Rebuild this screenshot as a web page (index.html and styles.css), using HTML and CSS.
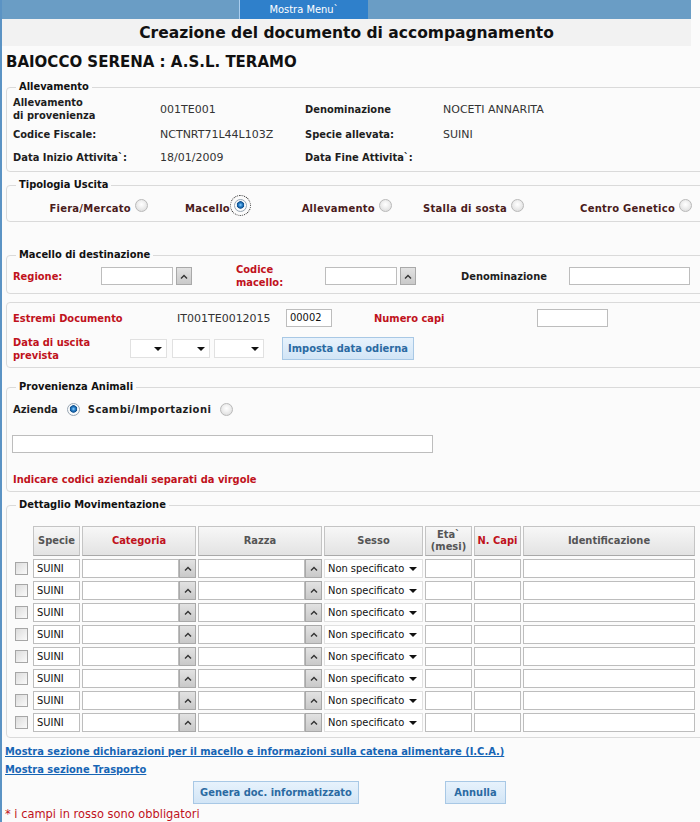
FILE: index.html
```html
<!DOCTYPE html>
<html lang="it">
<head>
<meta charset="utf-8">
<title>Creazione del documento di accompagnamento</title>
<link rel="stylesheet" href="styles.css">
</head>
<body>
<div class="page">
  <div class="topbar"><div class="menutab">Mostra Menu`</div></div>
  <h1 class="title">Creazione del documento di accompagnamento</h1>
  <h2 class="owner">BAIOCCO SERENA : A.S.L. TERAMO</h2>

  <fieldset class="fs fs-alle">
    <legend>Allevamento</legend>
    <div class="info">
      <span class="lbl">Allevamento<br>di provenienza</span><span class="val">001TE001</span><span class="lbl">Denominazione</span><span class="val">NOCETI ANNARITA</span>
      <span class="lbl">Codice Fiscale:</span><span class="val">NCTNRT71L44L103Z</span><span class="lbl">Specie allevata:</span><span class="val">SUINI</span>
      <span class="lbl">Data Inizio Attivita`:</span><span class="val">18/01/2009</span><span class="lbl">Data Fine Attivita`:</span><span class="val"></span>
    </div>
  </fieldset>

  <fieldset class="fs fs-tipo">
    <legend>Tipologia Uscita</legend>
    <div class="tipo">
      <label class="opt">Fiera/Mercato <input type="radio" name="tipo" class="rd"></label>
      <label class="opt">Macello <input type="radio" name="tipo" class="rd focus" checked></label>
      <label class="opt">Allevamento <input type="radio" name="tipo" class="rd"></label>
      <label class="opt">Stalla di sosta <input type="radio" name="tipo" class="rd"></label>
      <label class="opt">Centro Genetico <input type="radio" name="tipo" class="rd"></label>
    </div>
  </fieldset>

  <fieldset class="fs fs-dest">
    <legend>Macello di destinazione</legend>
    <div class="row dest">
      <span class="req w-reg">Regione:</span>
      <span class="in w72"></span><span class="up"><svg width="8" height="5" viewBox="0 0 8 5"><polyline points="1,4.5 4,1.5 7,4.5" fill="none" stroke="#333" stroke-width="1.4"/></svg></span>
      <span class="req w-cod">Codice<br>macello:</span>
      <span class="in w72"></span><span class="up"><svg width="8" height="5" viewBox="0 0 8 5"><polyline points="1,4.5 4,1.5 7,4.5" fill="none" stroke="#333" stroke-width="1.4"/></svg></span>
      <span class="lbl w-den">Denominazione</span>
      <span class="in w121"></span>
    </div>
  </fieldset>

  <fieldset class="fs fs-estr">
    <div class="row estr1">
      <span class="req w-estr">Estremi Documento</span>
      <span class="val w-code">IT001TE0012015</span>
      <span class="in w46 txt">00002</span>
      <span class="req w-num">Numero capi</span>
      <span class="in w71"></span>
    </div>
    <div class="row estr2">
      <span class="req w-data">Data di uscita<br>prevista</span>
      <span class="sel s37"><i class="caret"></i></span>
      <span class="sel s38"><i class="caret"></i></span>
      <span class="sel s50"><i class="caret"></i></span>
      <button class="btn b-imp" type="button">Imposta data odierna</button>
    </div>
  </fieldset>

  <fieldset class="fs fs-prov">
    <legend>Provenienza Animali</legend>
    <div class="row prov1">
      <label class="vlbl">Azienda</label>
      <input type="radio" name="prov" class="rd r-az" checked>
      <label class="vlbl l-sc">Scambi/Importazioni</label>
      <input type="radio" name="prov" class="rd r-sc">
    </div>
    <div class="in prov-in"></div>
    <div class="req hint">Indicare codici aziendali separati da virgole</div>
  </fieldset>

  <fieldset class="fs fs-det">
    <legend class="req">Dettaglio Movimentazione</legend>
    <div class="det">
      <div></div>
      <div class="th">Specie</div>
      <div class="th req">Categoria</div>
      <div class="th">Razza</div>
      <div class="th">Sesso</div>
      <div class="th">Eta`<br>(mesi)</div>
      <div class="th req">N. Capi</div>
      <div class="th">Identificazione</div>

      <div class="cb"><span class="chk"></span></div><div class="in txt">SUINI</div><div class="combo"><span class="in"></span><span class="up"><svg width="8" height="5" viewBox="0 0 8 5"><polyline points="1,4.5 4,1.5 7,4.5" fill="none" stroke="#333" stroke-width="1.4"/></svg></span></div><div class="combo"><span class="in"></span><span class="up"><svg width="8" height="5" viewBox="0 0 8 5"><polyline points="1,4.5 4,1.5 7,4.5" fill="none" stroke="#333" stroke-width="1.4"/></svg></span></div><div class="sel sx">Non specificato<i class="caret"></i></div><div class="in"></div><div class="in"></div><div class="in"></div>

      <div class="cb"><span class="chk"></span></div><div class="in txt">SUINI</div><div class="combo"><span class="in"></span><span class="up"><svg width="8" height="5" viewBox="0 0 8 5"><polyline points="1,4.5 4,1.5 7,4.5" fill="none" stroke="#333" stroke-width="1.4"/></svg></span></div><div class="combo"><span class="in"></span><span class="up"><svg width="8" height="5" viewBox="0 0 8 5"><polyline points="1,4.5 4,1.5 7,4.5" fill="none" stroke="#333" stroke-width="1.4"/></svg></span></div><div class="sel sx">Non specificato<i class="caret"></i></div><div class="in"></div><div class="in"></div><div class="in"></div>

      <div class="cb"><span class="chk"></span></div><div class="in txt">SUINI</div><div class="combo"><span class="in"></span><span class="up"><svg width="8" height="5" viewBox="0 0 8 5"><polyline points="1,4.5 4,1.5 7,4.5" fill="none" stroke="#333" stroke-width="1.4"/></svg></span></div><div class="combo"><span class="in"></span><span class="up"><svg width="8" height="5" viewBox="0 0 8 5"><polyline points="1,4.5 4,1.5 7,4.5" fill="none" stroke="#333" stroke-width="1.4"/></svg></span></div><div class="sel sx">Non specificato<i class="caret"></i></div><div class="in"></div><div class="in"></div><div class="in"></div>

      <div class="cb"><span class="chk"></span></div><div class="in txt">SUINI</div><div class="combo"><span class="in"></span><span class="up"><svg width="8" height="5" viewBox="0 0 8 5"><polyline points="1,4.5 4,1.5 7,4.5" fill="none" stroke="#333" stroke-width="1.4"/></svg></span></div><div class="combo"><span class="in"></span><span class="up"><svg width="8" height="5" viewBox="0 0 8 5"><polyline points="1,4.5 4,1.5 7,4.5" fill="none" stroke="#333" stroke-width="1.4"/></svg></span></div><div class="sel sx">Non specificato<i class="caret"></i></div><div class="in"></div><div class="in"></div><div class="in"></div>

      <div class="cb"><span class="chk"></span></div><div class="in txt">SUINI</div><div class="combo"><span class="in"></span><span class="up"><svg width="8" height="5" viewBox="0 0 8 5"><polyline points="1,4.5 4,1.5 7,4.5" fill="none" stroke="#333" stroke-width="1.4"/></svg></span></div><div class="combo"><span class="in"></span><span class="up"><svg width="8" height="5" viewBox="0 0 8 5"><polyline points="1,4.5 4,1.5 7,4.5" fill="none" stroke="#333" stroke-width="1.4"/></svg></span></div><div class="sel sx">Non specificato<i class="caret"></i></div><div class="in"></div><div class="in"></div><div class="in"></div>

      <div class="cb"><span class="chk"></span></div><div class="in txt">SUINI</div><div class="combo"><span class="in"></span><span class="up"><svg width="8" height="5" viewBox="0 0 8 5"><polyline points="1,4.5 4,1.5 7,4.5" fill="none" stroke="#333" stroke-width="1.4"/></svg></span></div><div class="combo"><span class="in"></span><span class="up"><svg width="8" height="5" viewBox="0 0 8 5"><polyline points="1,4.5 4,1.5 7,4.5" fill="none" stroke="#333" stroke-width="1.4"/></svg></span></div><div class="sel sx">Non specificato<i class="caret"></i></div><div class="in"></div><div class="in"></div><div class="in"></div>

      <div class="cb"><span class="chk"></span></div><div class="in txt">SUINI</div><div class="combo"><span class="in"></span><span class="up"><svg width="8" height="5" viewBox="0 0 8 5"><polyline points="1,4.5 4,1.5 7,4.5" fill="none" stroke="#333" stroke-width="1.4"/></svg></span></div><div class="combo"><span class="in"></span><span class="up"><svg width="8" height="5" viewBox="0 0 8 5"><polyline points="1,4.5 4,1.5 7,4.5" fill="none" stroke="#333" stroke-width="1.4"/></svg></span></div><div class="sel sx">Non specificato<i class="caret"></i></div><div class="in"></div><div class="in"></div><div class="in"></div>

      <div class="cb"><span class="chk"></span></div><div class="in txt">SUINI</div><div class="combo"><span class="in"></span><span class="up"><svg width="8" height="5" viewBox="0 0 8 5"><polyline points="1,4.5 4,1.5 7,4.5" fill="none" stroke="#333" stroke-width="1.4"/></svg></span></div><div class="combo"><span class="in"></span><span class="up"><svg width="8" height="5" viewBox="0 0 8 5"><polyline points="1,4.5 4,1.5 7,4.5" fill="none" stroke="#333" stroke-width="1.4"/></svg></span></div><div class="sel sx">Non specificato<i class="caret"></i></div><div class="in"></div><div class="in"></div><div class="in"></div>
    </div>
  </fieldset>

  <div class="links">
    <a href="#" class="lnk l1">Mostra sezione dichiarazioni per il macello e informazioni sulla catena alimentare (I.C.A.)</a>
    <a href="#" class="lnk l2">Mostra sezione Trasporto</a>
  </div>
  <div class="row actions">
    <button class="btn b-gen" type="button">Genera doc. informatizzato</button>
    <button class="btn b-ann" type="button">Annulla</button>
  </div>
  <div class="note">* i campi in rosso sono obbligatori</div>
</div>
</body>
</html>
```

FILE: styles.css
```css
* { box-sizing: border-box; }
html, body { margin: 0; padding: 0; overflow: hidden; background: #fbfbfb; }
body {
  font-family: "DejaVu Sans Condensed", "DejaVu Sans", sans-serif;
  font-size: 11px;
  line-height: 13px;
  color: #222;
}
.page { width: 730px; min-height: 822px; border-left: 2px solid #5b93c4; }

.topbar { width: 689px; height: 19px; background: #6a9dc5; padding-left: 237px; }
.menutab {
  width: 129px; height: 19px; background: #2f80cb; border-left: 1px solid #a9cdee;
  color: #fff; font-size: 11px; line-height: 19px; text-align: center;
}
.title {
  margin: 0; width: 689px; height: 27px; background: #f2f2f2;
  font-family: "DejaVu Sans", sans-serif; font-size: 15.5px; font-weight: bold;
  line-height: 28px; text-align: center; color: #111;
}
.owner {
  margin: 0; padding: 7px 0 9px 4px;
  font-family: "DejaVu Sans", sans-serif; font-size: 15px; line-height: 18px;
  font-weight: bold; color: #111;
}

.fs {
  margin: 0 0 0 4px; padding: 0 6px; min-width: 0;
  border: 1px solid #dadada; border-radius: 4px;
}
.fs legend { margin-left: 3px; padding: 0 3px; font-weight: bold; line-height: 14px; color: #111; }
.fs-tipo { margin-top: 6px; }
.fs-dest { margin-top: 26px; }
.fs-estr { margin-top: 8px; }
.fs-prov { margin-top: 12px; }
.fs-det { margin-top: 6px; }

.lbl { font-weight: bold; color: #1e1e1e; }
.val { font-family: "DejaVu Sans", sans-serif; font-size: 11px; color: #333; }
.req { color: #c0121c; font-weight: bold; }

.info {
  display: grid; grid-template-columns: 147px 145px 138px 1fr;
  grid-template-rows: 26px 24px 23px; align-items: center; padding: 2px 0;
}

.tipo {
  display: grid; grid-template-columns: 135px 99px 145px 132px 168px;
  height: 18px; align-items: center; margin: 7px 0 4px;
}
.opt {
  display: flex; justify-content: flex-end; align-items: center; gap: 4px;
  font-family: "DejaVu Sans", sans-serif; font-size: 10px; font-weight: bold;
  letter-spacing: 0.25px; color: #4a1c1c;
}
.opt .rd { margin-bottom: 6px; }

.rd {
  -webkit-appearance: none; appearance: none; margin: 0; flex: none;
  width: 13px; height: 13px; border-radius: 50%;
  border: 1px solid #b9b9b9;
  background: radial-gradient(circle at 50% 40%, #ffffff 0, #f2f2f2 35%, #d6d6d6 100%);
}
.rd:checked {
  border-color: #98a6b3;
  background: radial-gradient(circle at 50% 45%, #9ad6ff 0, #2f87d0 1.6px, #0d4f8e 3.4px, #e6edf3 4px, #ffffff 4.8px, #dedede 100%);
}
.rd.focus { outline: 1px dotted #222; outline-offset: 3px; }

.row { display: flex; align-items: center; }

.in { display: block; height: 18px; border: 1px solid #bdbdbd; background: #fff; flex: none; }
.in.txt { font-size: 11px; line-height: 16px; padding-left: 3px; color: #111; }
.up {
  display: flex; align-items: center; justify-content: center; flex: none;
  width: 16px; height: 18px; border: 1px solid #a9a9a9;
  background: linear-gradient(#e2e2e2, #c9c9c9);
}

.dest { height: 26px; margin: 1px 0 4px; }
.w-reg { width: 88px; }
.w72 { width: 72px; }
.dest .up { margin-left: 3px; }
.w-cod { width: 89px; margin-left: 44px; }
.w-den { width: 108px; margin-left: 45px; }
.w121 { width: 121px; }

.estr1 { height: 22px; margin-top: 4px; }
.w-estr { width: 164px; }
.w-code { width: 109px; }
.w46 { width: 46px; }
.w-num { width: 163px; margin-left: 42px; }
.w71 { width: 71px; }
.estr2 { height: 27px; margin: 6px 0 5px; }
.w-data { width: 117px; }

.sel {
  display: flex; align-items: center; height: 19px; flex: none;
  border: 1px solid #e1e1e1; background: #fff; padding: 0 4px 0 3px;
}
.caret {
  margin-left: auto; width: 0; height: 0;
  border-left: 4px solid transparent; border-right: 4px solid transparent; border-top: 4px solid #111;
}
.s37 { width: 37px; }
.s38 { width: 38px; margin-left: 5px; }
.s50 { width: 50px; margin-left: 4px; }

.btn {
  height: 23px; padding: 0; border: 1px solid #a8c8e5;
  background: linear-gradient(#e7f2fc, #d2e5f6);
  color: #2b6aa2; font-family: "DejaVu Sans Condensed", "DejaVu Sans", sans-serif;
  font-size: 11px; font-weight: bold;
}
.b-imp { width: 132px; margin-left: 18px; }

.prov1 { height: 16px; margin-top: 7px; }
.vlbl { font-family: "DejaVu Sans", sans-serif; font-size: 10px; font-weight: bold; color: #1e1e1e; }
.l-sc { letter-spacing: 0.4px; }
.r-az { margin-left: 9px; }
.l-sc { margin-left: 8px; }
.r-sc { margin-left: 9px; }
.prov-in { width: 421px; margin: 18px 0 0 -1px; }
.hint { margin: 20px 0 4px; line-height: 14px; }

.det {
  display: grid;
  grid-template-columns: 18px 47px 114px 124px 99px 47px 47px 172px;
  grid-template-rows: 30px; grid-auto-rows: 19px;
  column-gap: 2px; row-gap: 3px; padding: 14px 0 5px;
}
.th {
  display: flex; align-items: center; justify-content: center; text-align: center;
  border: 1px solid #c4c4c4; border-bottom-color: #a9a9a9;
  background: linear-gradient(#f7f7f7, #e3e3e3);
  font-weight: bold; color: #555; line-height: 12px;
}
.th.req { color: #c0121c; }
.det .in { height: 19px; }
.det .in.txt { line-height: 17px; }
.cb { display: flex; align-items: center; justify-content: flex-end; padding-right: 3px; }
.chk {
  width: 13px; height: 13px; border: 1px solid #a6a6a6;
  background: linear-gradient(135deg, #dcdcdc, #fafafa);
}
.combo { display: flex; }
.combo .in { flex: 1; }
.combo .up { width: 17px; height: 19px; }
.sx { height: 19px; padding-left: 3px; padding-right: 5px; color: #111; }

.links { padding-left: 3px; }
.lnk { display: block; color: #1765b5; font-weight: bold; text-decoration: underline; line-height: 14px; width: max-content; }
.l1 { margin-top: 7px; }
.l2 { margin-top: 4px; }
.actions { margin-top: 4px; }
.b-gen { width: 166px; margin-left: 191px; }
.b-ann { width: 61px; margin-left: 86px; }
.note { margin-top: 3px; padding-left: 3px; line-height: 14px; font-size: 12.7px; color: #c0121c; }
```
